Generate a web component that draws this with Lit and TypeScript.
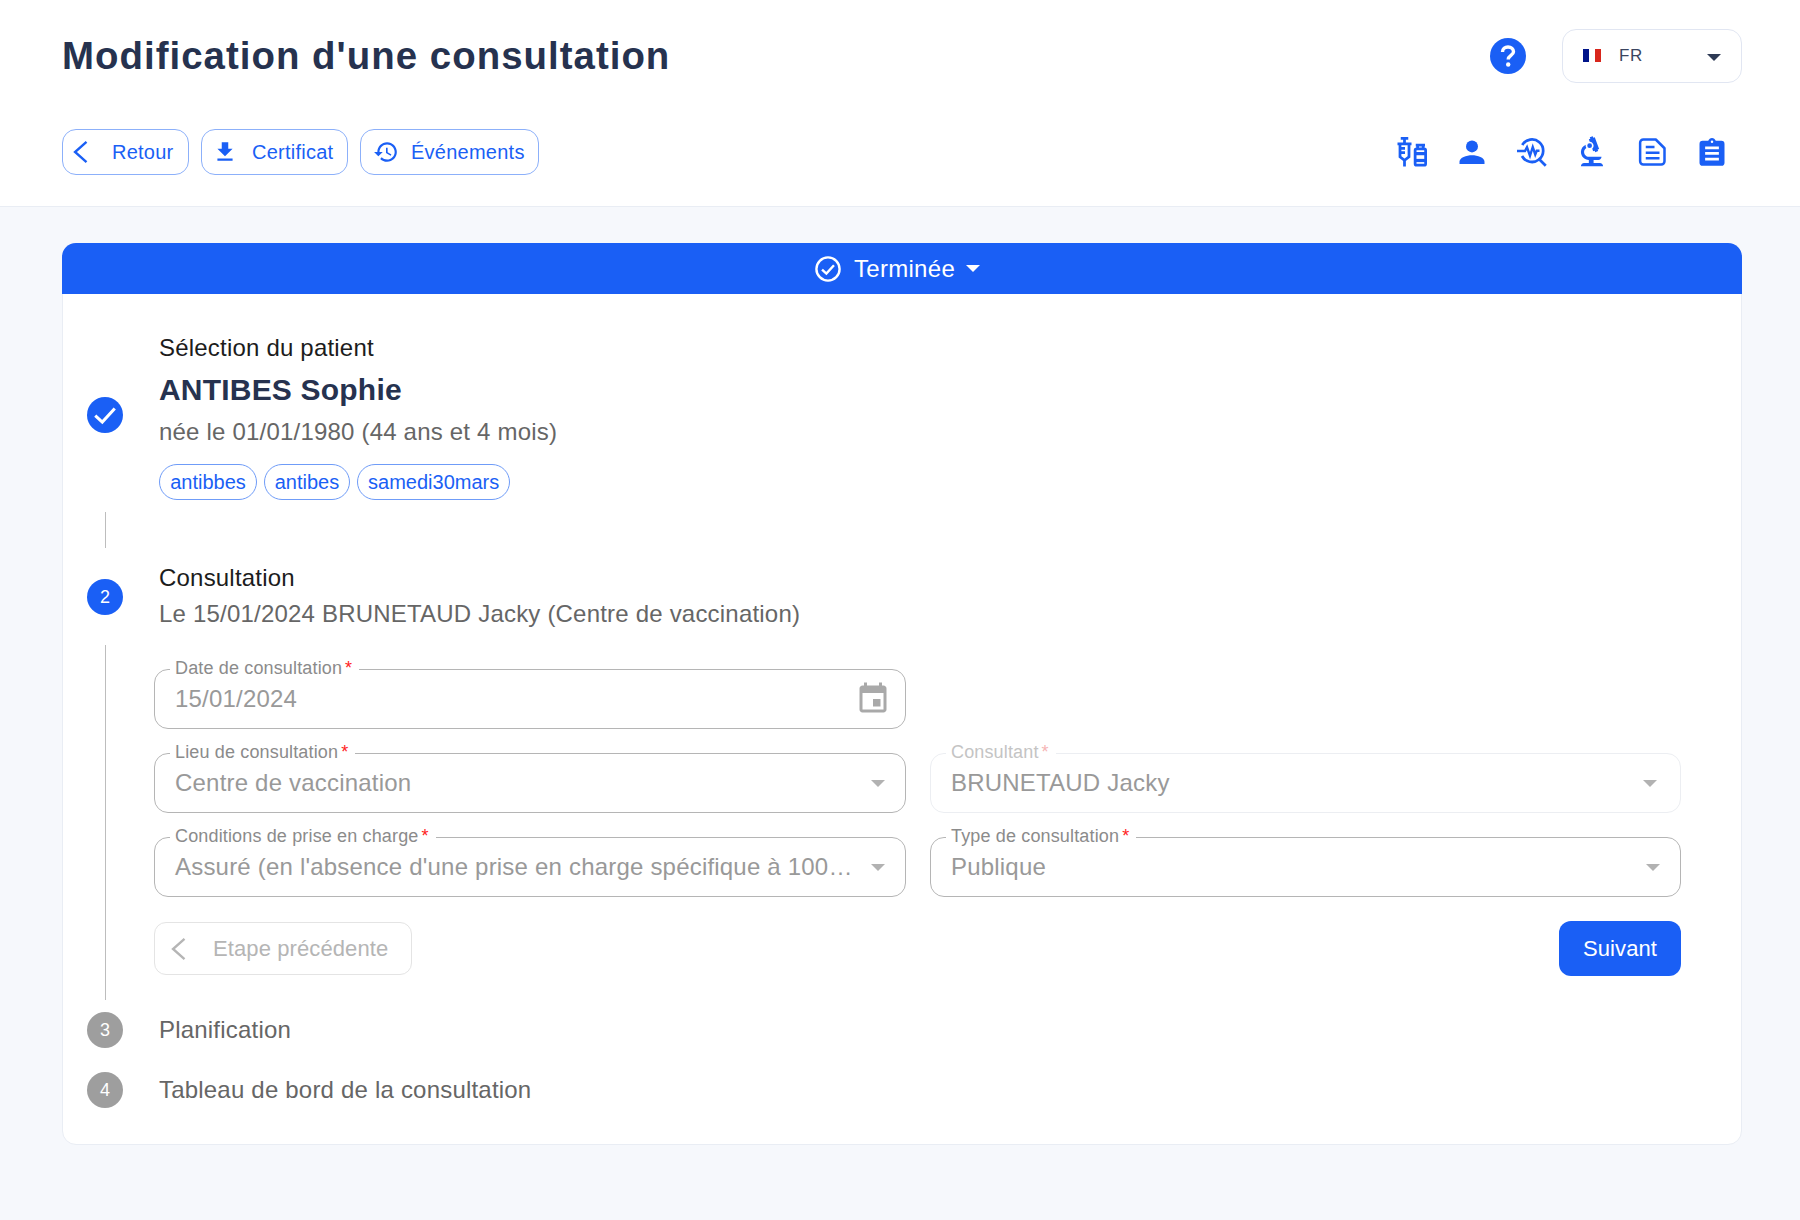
import { LitElement, html, css, svg } from "lit";
import { customElement } from "lit/decorators.js";

const ico = (content: unknown, size: number, cls = "") =>
  html`<svg class=${cls} width=${size} height=${size} viewBox="0 0 24 24" fill="currentColor">${content}</svg>`;

const chevron = svg`<polyline points="18,1 5.500,12 18,23" fill="none" stroke="currentColor" stroke-width="2.600"/>`;
const download = svg`<path d="M19 9h-4V3H9v6H5l7 7 7-7zM5 18v2h14v-2H5z"/>`;
const history = svg`<path d="M13 3c-4.970 0-9 4.030-9 9H1l3.890 3.890.07.14L9 12H6c0-3.870 3.130-7 7-7s7 3.130 7 7-3.130 7-7 7c-1.930 0-3.680-.79-4.940-2.060l-1.420 1.420C8.270 19.990 10.510 21 13 21c4.970 0 9-4.030 9-9s-4.030-9-9-9zm-1 5v5l4.280 2.540.72-1.210-3.500-2.080V8H12z"/>`;
const person = svg`<circle cx="12" cy="7.500" r="4.800"/><path d="M2 21.500v-1.700c0-3.500 5.500-5.300 10-5.300s10 1.800 10 5.300v1.700z"/>`;
const vaccines = svg`<g fill="none" stroke="currentColor" stroke-width="2.200"><path d="M3 1h6M6 1v4M.4 5.400h11.200M2.400 5.400v10.400l3.600 2.800 3.600-2.800V5.400M6 18v5.500M2.800 9h3.600M2.800 12.500h3.600"/><rect x="14.500" y="9.500" width="8.400" height="13" rx="1.200"/><path d="M15 6.400h7.400M16.500 7v2.400M20.900 7v2.400"/></g><rect x="14.500" y="12" width="8.400" height="2.600"/><rect x="14.500" y="17.500" width="8.400" height="2.600"/>`;
const search = svg`<g fill="none" stroke="currentColor" stroke-width="2.200"><path d="M4.200 6.400A9 9 0 1 1 4 15.200M17 17l6 6"/><path d="M0 11.200h6.400l1.600-3 2.400 6.800 2.200-7 2 6 1.200-3h2.200" stroke-width="1.900"/></g>`;
const biotech = svg`<path d="M7 19c-1.100 0-2 .9-2 2h14c0-1.100-.9-2-2-2h-4v-2h3c1.100 0 2-.9 2-2h-8c-1.660 0-3-1.340-3-3 0-1.090.59-2.040 1.460-2.560C8.170 9.030 8 8.540 8 8c0-.21.04-.42.09-.62C6.280 8.130 5 9.920 5 12c0 2.760 2.240 5 5 5v2H7z"/><path d="M10.560 5.510C11.910 5.540 13 6.640 13 8c0 .75-.33 1.410-.85 1.870l.59 1.620.94-.34.34.94 1.880-.68-.34-.94.94-.34-2.740-7.520-.94.34-.34-.94-1.880.68.34.94-.94.35.56 1.530z"/><circle cx="10.500" cy="8" r="1.500"/>`;
const note = svg`<g fill="none" stroke="currentColor" stroke-width="2"><path d="M2.500 4.600A2.600 2.600 0 0 1 5.100 2H15l7 7v10.400a2.600 2.600 0 0 1-2.600 2.600H5.100a2.600 2.600 0 0 1-2.600-2.600z" stroke-linejoin="round"/><path d="M7 8h7M7 12.500h11M7 17h11"/></g>`;
const clipboard = svg`<path fill-rule="evenodd" d="M4.500 3H9C9.500 1.600 10.700.7 12 .7s2.500.9 3 2.300h4.500A2.500 2.500 0 0 1 22 5.500v15a2.500 2.500 0 0 1-2.500 2.500h-15A2.500 2.500 0 0 1 2 20.500v-15A2.500 2.500 0 0 1 4.500 3zM12 2.800a1 1 0 1 0 0 2 1 1 0 0 0 0-2zM6.500 7.500v2.200h11V7.500zm0 4.500v2.200h11V12zm0 4.500v2.200h11v-2.200z"/>`;
const event = svg`<path d="M17 12h-5v5h5v-5zM16 1v2H8V1H6v2H5c-1.110 0-1.990.9-1.990 2L3 19c0 1.100.89 2 2 2h14c1.100 0 2-.9 2-2V5c0-1.100-.9-2-2-2h-1V1h-2zm3 18H5V8h14v11z"/>`;
const circleCheck = svg`<circle cx="12" cy="12" r="10.700" fill="none" stroke="currentColor" stroke-width="2.200"/><polyline points="6.500,12.500 10.500,16.300 17.500,8.500" fill="none" stroke="currentColor" stroke-width="2.200"/>`;
const check = svg`<polyline points="3,12.500 9.500,18.500 21,6" fill="none" stroke="currentColor" stroke-width="2.800"/>`;

@customElement("app-root")
export class AppRoot extends LitElement {
  static styles = css`
    :host { display: block; min-height: 1220px; background: #f6f8fc; font-family: "Liberation Sans", Arial, sans-serif; }
    * { box-sizing: border-box; }
    .head { background: #fff; border-bottom: 1px solid #e9edf4; height: 207px; padding: 29px 58px 0 62px; }
    .top { display: flex; align-items: center; height: 54px; }
    h1 { margin: 0; font-size: 38.400px; line-height: 54px; font-weight: 700; color: #26324f; letter-spacing: 1.030px; flex: 1; }
    .help { width: 36px; height: 36px; margin-right: 36px; display: block; }
    .lang { width: 180px; height: 54px; border: 1px solid #e1e6f2; border-radius: 14px; display: flex; align-items: center; padding: 0 20px 0 20px; color: #3a4560; font-size: 17px; letter-spacing: 0.6px; }
    .flag { display: flex; width: 18px; height: 13px; margin-right: 18px; margin-top: -2px; }
    .flag i { flex: 1; }
    .lang span { flex: 1; }
    .caret-d { width: 0; height: 0; border-left: 7.500px solid transparent; border-right: 7.500px solid transparent; border-top: 7.500px solid #2e3a55; margin-top: 2px; }
    .tools { display: flex; align-items: center; margin-top: 46px; height: 46px; }
    .tbtn { height: 46px; border: 1px solid #8cb0fa; border-radius: 14px; display: flex; align-items: center; color: #1a5ff5; font-size: 20px; letter-spacing: 0.25px; margin-right: 12px; background: #fff; }
    .tbtn.r { width: 127px; padding-left: 7px; }
    .tbtn.c { width: 147px; padding-left: 10px; }
    .tbtn.e { width: 179px; padding-left: 12px; }
    .tbtn.r svg { margin-right: 20px; }
    .tbtn.c svg { margin-right: 14px; }
    .tbtn.e svg { margin-right: 12px; }
    .spacer { flex: 1; }
    .tool-ic { display: flex; align-items: center; color: #1a5ff5; gap: 30px; margin-right: 15px; }
    .tool-ic .big { margin: -4px; }
    .main { padding: 36px 58px 0 62px; }
    .card { background: #fff; border: 1px solid #e9edf4; border-radius: 14px; height: 902px; }
    .banner { background: #1a5ff5; color: #fff; margin: -1px -1px 0; height: 51px; border-radius: 14px 14px 0 0; display: flex; align-items: center; justify-content: center; font-size: 24px; letter-spacing: 0.3px; padding-right: 9px; }
    .banner svg { margin-right: 13px; }
    .banner .tri { width: 0; height: 0; border-left: 7.500px solid transparent; border-right: 7.500px solid transparent; border-top: 7.500px solid #fff; margin-left: 11px; }
    .steps { padding: 39px 60px 0 24px; }
    .step { display: grid; grid-template-columns: 36px 1fr; column-gap: 36px; align-items: center; }
    .dot { width: 36px; height: 36px; border-radius: 50%; background: #1a5ff5; color: #fff; display: flex; align-items: center; justify-content: center; font-size: 18px; }
    .dot.off { background: #9e9e9e; }
    .dot.one { margin-top: -3px; }
    .dot.two { margin-top: 2px; }
    .t { font-size: 24px; line-height: 30px; color: #1c1c1c; letter-spacing: 0.2px; }
    .name { font-size: 30px; line-height: 40px; font-weight: 700; color: #26324f; margin-top: 7px; letter-spacing: 0.2px; }
    .sub { font-size: 24px; line-height: 30px; color: #666; letter-spacing: 0.2px; margin-top: 7px; }
    .tags { display: flex; gap: 6.500px; margin-top: 17px; }
    .tag { height: 36px; border: 1px solid #6f9cf8; border-radius: 18px; padding: 0 10.200px; display: flex; align-items: center; color: #1a5ff5; font-size: 20px; }
    .conn { width: 1px; height: 36px; background: #bdbdbd; margin: 12px 0 0 17.500px; }
    .s2 { margin-top: 15px; }
    .s2 .sub { margin-top: 6px; }
    .formwrap { display: grid; grid-template-columns: 36px 1fr; column-gap: 31px; margin-top: 16px; }
    .long { width: 1px; height: 355px; background: #bdbdbd; margin-left: 17.500px; }
    .grid { display: grid; grid-template-columns: 752px 751px; column-gap: 24px; row-gap: 13px; padding-top: 13px; align-content: start; }
    fieldset { margin: 0; padding: 0 20px 10px 20px; border: 1px solid #b5b5b5; border-radius: 14px; height: 71px; min-width: 0; display: flex; align-items: center; }
    legend { margin-left: -5px; padding: 0 7px 2px 5px; font-size: 18px; line-height: 20px; color: #8b8b8b; letter-spacing: 0.15px; }
    legend b { font-weight: 400; color: #f22; margin-left: 3px; }
    fieldset.dis { border-color: #eceef2; }
    fieldset.dis legend { color: #c4c4c4; }
    fieldset.dis legend b { color: #f6b5b5; }
    .val { flex: 1; font-size: 24px; line-height: 30px; color: #999; letter-spacing: 0.2px; white-space: nowrap; min-width: 0; }
    .tri-g { width: 0; height: 0; border-left: 7.500px solid transparent; border-right: 7.500px solid transparent; border-top: 7.500px solid #b2b2b2; margin-left: 12px; margin-right: 0; flex: none; }
    fieldset.dis .tri-g { margin-right: 3px; }
    .cal { color: #a9a9a9; margin-right: -5.500px; flex: none; }
    .acts { grid-column: 1 / 3; display: flex; justify-content: space-between; align-items: center; margin-top: 11px; }
    .prev { width: 258px; height: 53px; border: 1px solid #e4e4e4; border-radius: 12px; display: flex; align-items: center; padding-left: 13px; color: #b5b5b5; font-size: 22px; letter-spacing: 0.1px; }
    .prev svg { margin-right: 23px; }
    .next { width: 122px; height: 55px; border-radius: 12px; background: #1a5ff5; color: #fff; font-size: 22px; letter-spacing: 0.1px; display: flex; align-items: center; justify-content: center; }
    .s3 { margin-top: 12px; }
    .s4 { margin-top: 24px; }
    .t.off { color: #666; }
  `;

  private field(label: string, value: string, opts: { dis?: boolean; cal?: boolean } = {}) {
    return html`<fieldset class=${opts.dis ? "dis" : ""}>
      <legend>${label}<b>*</b></legend>
      <span class="val">${value}</span>
      ${opts.cal ? ico(event, 36, "cal") : html`<span class="tri-g"></span>`}
    </fieldset>`;
  }

  render() {
    return html`
      <div class="head">
        <div class="top">
          <h1>Modification d'une consultation</h1>
          <svg class="help" viewBox="0 0 36 36"><circle cx="18" cy="18" r="18" fill="#1a5ff5"/><path d="M12.500 14c0-3.200 2.400-5 5.500-5s5.500 1.800 5.500 4.800c0 3.600-5.300 3.700-5.300 7.700" fill="none" stroke="#fff" stroke-width="3.400"/><circle cx="18.200" cy="26.500" r="2.200" fill="#fff"/></svg>
          <div class="lang"><div class="flag"><i style="background:#001489"></i><i style="background:#fff"></i><i style="background:#d8261c"></i></div><span>FR</span><div class="caret-d"></div></div>
        </div>
        <div class="tools">
          <div class="tbtn r">${ico(chevron, 22)}Retour</div>
          <div class="tbtn c">${ico(download, 26)}Certificat</div>
          <div class="tbtn e">${ico(history, 26)}Événements</div>
          <div class="spacer"></div>
          <div class="tool-ic">${ico(vaccines, 30)}${ico(person, 30)}${ico(search, 30)}${ico(biotech, 38, "big")}${ico(note, 30)}${ico(clipboard, 30)}</div>
        </div>
      </div>
      <div class="main">
        <div class="card">
          <div class="banner">${ico(circleCheck, 26)}<span>Terminée</span><span class="tri"></span></div>
          <div class="steps">
            <div class="step">
              <div class="dot one">${ico(check, 26)}</div>
              <div>
                <div class="t">Sélection du patient</div>
                <div class="name">ANTIBES Sophie</div>
                <div class="sub">née le 01/01/1980 (44 ans et 4 mois)</div>
                <div class="tags"><span class="tag">antibbes</span><span class="tag">antibes</span><span class="tag">samedi30mars</span></div>
              </div>
            </div>
            <div class="conn"></div>
            <div class="step s2">
              <div class="dot two">2</div>
              <div>
                <div class="t">Consultation</div>
                <div class="sub">Le 15/01/2024 BRUNETAUD Jacky (Centre de vaccination)</div>
              </div>
            </div>
            <div class="formwrap">
              <div class="long"></div>
              <div class="grid">
                ${this.field("Date de consultation", "15/01/2024", { cal: true })}
                <div></div>
                ${this.field("Lieu de consultation", "Centre de vaccination")}
                ${this.field("Consultant", "BRUNETAUD Jacky", { dis: true })}
                ${this.field("Conditions de prise en charge", "Assuré (en l'absence d'une prise en charge spécifique à 100…")}
                ${this.field("Type de consultation", "Publique")}
                <div class="acts">
                  <div class="prev">${ico(chevron, 22)}Etape précédente</div>
                  <div class="next">Suivant</div>
                </div>
              </div>
            </div>
            <div class="step s3"><div class="dot off">3</div><div class="t off">Planification</div></div>
            <div class="step s4"><div class="dot off">4</div><div class="t off">Tableau de bord de la consultation</div></div>
          </div>
        </div>
      </div>
    `;
  }
}
